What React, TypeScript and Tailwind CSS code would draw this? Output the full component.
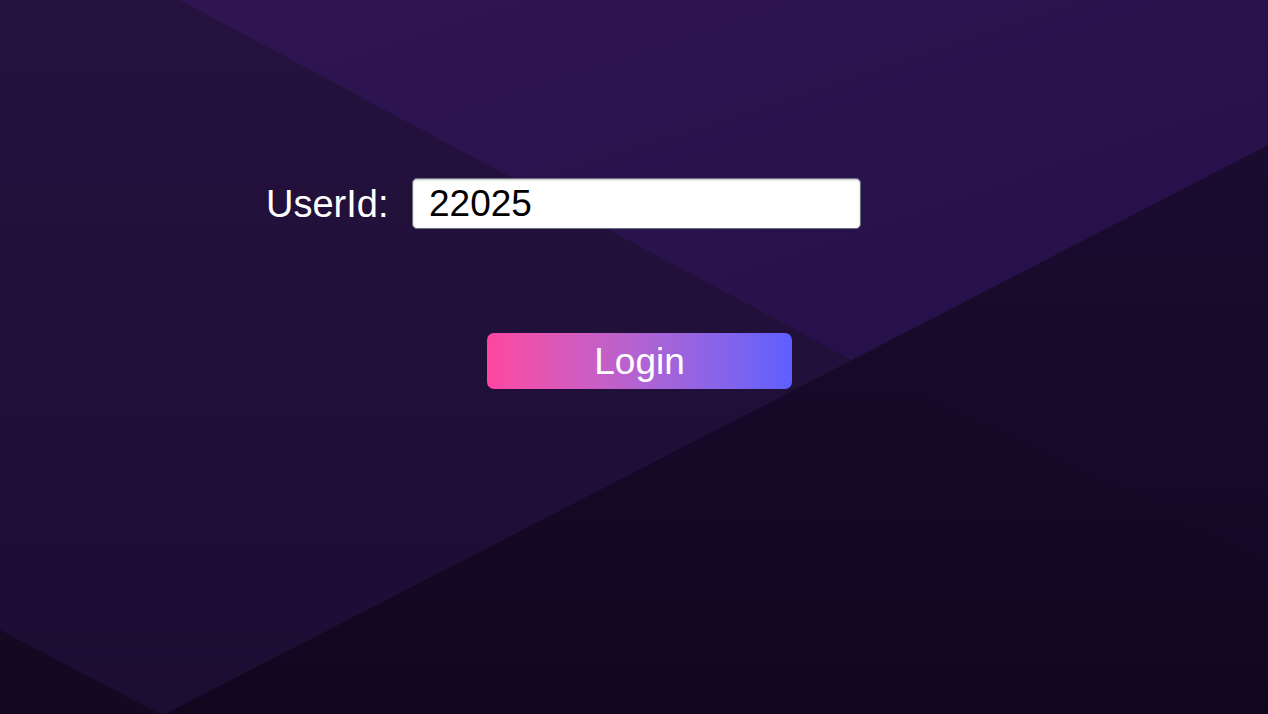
import { useState } from 'react';

// Fondo poligonal morado
const Fondo = () => (
  <svg className="absolute inset-0 w-full h-full" viewBox="0 0 1268 714" preserveAspectRatio="none">
    <defs>
      <linearGradient id="gIzq" x1="0" y1="0" x2="0" y2="1">
        <stop offset="0" stopColor="#25123f" />
        <stop offset="1" stopColor="#1c0d33" />
      </linearGradient>
      <linearGradient id="gArriba" x1="0" y1="0" x2="1" y2="1">
        <stop offset="0" stopColor="#2f1552" />
        <stop offset="1" stopColor="#261049" />
      </linearGradient>
      <linearGradient id="gAbajo" x1="0" y1="0" x2="0" y2="1">
        <stop offset="0" stopColor="#1a0c30" />
        <stop offset="1" stopColor="#12061f" />
      </linearGradient>
    </defs>
    <rect x="0" y="0" width="1268" height="714" fill="url(#gIzq)" />
    <polygon points="180,0 1268,0 1268,145 852,360" fill="url(#gArriba)" />
    <polygon points="1268,145 1268,714 165,714 852,360" fill="url(#gAbajo)" />
    <polygon points="852,360 1268,360 1268,560" fill="#170a2b" opacity="0.5" />
    <polygon points="0,630 160,714 0,714" fill="#140823" />
  </svg>
);

export default function App() {
  const [userId, setUserId] = useState('22025');

  return (
    <div className="relative w-full h-[714px] overflow-hidden bg-[#1f0f38] font-['Liberation_Sans',Arial,sans-serif]">
      <Fondo />
      <div className="relative flex flex-col pt-[178px]">
        <div className="flex items-center pl-[266px]">
          <label className="text-[38px] text-white leading-none w-[146px]">UserId:</label>
          <input
            type="text"
            value={userId}
            onChange={(e) => setUserId(e.target.value)}
            className="w-[449px] h-[51px] rounded-[5px] border border-gray-500 bg-white px-4 text-[37px] text-black outline-none shadow-[inset_0_1px_2px_rgba(0,0,0,0.25)]"
          />
        </div>
        <button className="ml-[487px] mt-[104px] w-[305px] h-[56px] rounded-[7px] bg-gradient-to-r from-[#ff45a0] to-[#5c5fff] text-[37px] text-white leading-none">
          Login
        </button>
      </div>
    </div>
  );
}
